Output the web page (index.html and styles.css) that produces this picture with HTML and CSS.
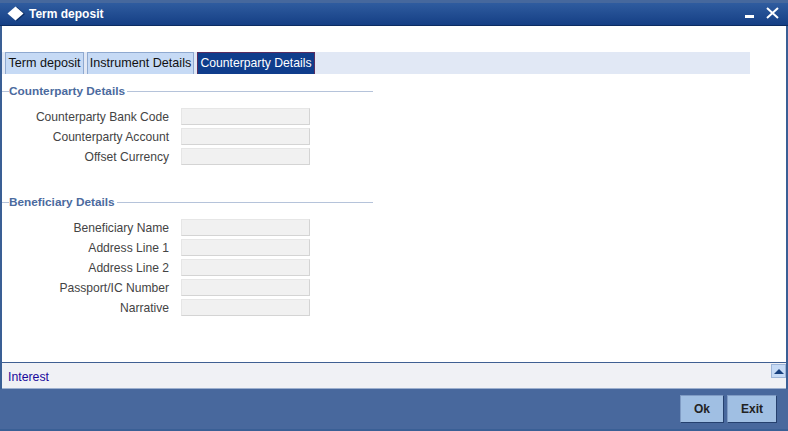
FILE: index.html
```html
<!DOCTYPE html>
<html lang="en">
<head>
    <meta charset="UTF-8">
    <title>Term deposit</title>
    <link rel="stylesheet" href="styles.css">
</head>
<body>

<div class="window">
    <div class="title-bar">
        <svg class="title-icon" width="18" height="16" viewBox="0 0 18 16">
            <path d="M10 1 L18 8 L10 15 L2 8 Z" fill="#0c2c62"/>
            <path d="M8.5 0.5 L16.5 7.5 L8.5 14.5 L0.5 7.5 Z" fill="#fff"/>
        </svg>
        <span class="title-text">Term deposit</span>
        <div class="title-controls">
            <span class="minimize"></span>
            <svg class="close" width="13" height="12" viewBox="0 0 13 12">
                <path d="M1 1 L12 11 M12 1 L1 11" stroke="#fff" stroke-width="2" fill="none"/>
            </svg>
        </div>
    </div>

    <div class="content">
        <div class="tabs">
            <div class="tab tab-term">Term deposit</div>
            <div class="tab tab-instrument">Instrument Details</div>
            <div class="tab tab-active">Counterparty Details</div>
        </div>

        <div class="section section-first">
            <div class="section-title"><span>Counterparty Details</span></div>
            <div class="field"><label>Counterparty Bank Code</label><input type="text" disabled></div>
            <div class="field"><label>Counterparty Account</label><input type="text" disabled></div>
            <div class="field"><label>Offset Currency</label><input type="text" disabled></div>
        </div>

        <div class="section section-second">
            <div class="section-title"><span>Beneficiary Details</span></div>
            <div class="field"><label>Beneficiary Name</label><input type="text" disabled></div>
            <div class="field"><label>Address Line 1</label><input type="text" disabled></div>
            <div class="field"><label>Address Line 2</label><input type="text" disabled></div>
            <div class="field"><label>Passport/IC Number</label><input type="text" disabled></div>
            <div class="field"><label>Narrative</label><input type="text" disabled></div>
        </div>
    </div>

    <div class="sub-bar">
        <a class="sub-link">Interest</a>
        <div class="collapse-btn"><span class="arrow-up"></span></div>
    </div>

    <div class="footer">
        <button class="footer-btn">Ok</button>
        <button class="footer-btn">Exit</button>
    </div>
</div>

</body>
</html>
```

FILE: styles.css
```css
html, body {
    margin: 0;
    padding: 0;
}
body {
    width: 788px;
    height: 431px;
    overflow: hidden;
    font-family: "Liberation Sans", Arial, sans-serif;
    font-size: 12px;
}
.window {
    width: 788px;
    height: 431px;
    box-sizing: border-box;
    display: flex;
    flex-direction: column;
    background: #fff;
    border-left: 2px solid #3a5f95;
    border-right: 2px solid #3a5f95;
}
.title-bar {
    height: 26px;
    margin: 0 -2px;
    box-sizing: border-box;
    display: flex;
    align-items: center;
    padding: 0 9px 1px 7px;
    border-top: 3px solid #46689d;
    border-bottom: 1px solid #0c2c62;
    background: linear-gradient(#2f5c9f, #153f85);
    color: #fff;
}
.title-icon {
    margin-right: 4px;
}
.title-text {
    font-weight: bold;
    font-size: 12px;
}
.title-controls {
    margin-left: auto;
    display: flex;
    align-items: flex-start;
    gap: 12px;
}
.minimize {
    width: 9px;
    height: 3px;
    margin-top: 7px;
    background: #fff;
}
.close {
    margin-top: -1px;
}
.content {
    flex: 1;
    padding-top: 26px;
}
.tabs {
    width: 748px;
    height: 22px;
    display: flex;
    gap: 3px;
    padding-left: 3px;
    box-sizing: border-box;
    background: #e1e8f5;
}
.tab {
    box-sizing: border-box;
    height: 22px;
    padding-top: 3px;
    background: #c6daf5;
    border: 1px solid #8fa9d0;
    border-bottom: none;
    color: #111;
    font-size: 12.6px;
    text-align: center;
    white-space: nowrap;
}
.tab-term {
    width: 79px;
}
.tab-instrument {
    width: 107px;
}
.tab-active {
    width: 118px;
    background: #0f3d8c;
    border-color: #5a2d5e;
    color: #fff;
    font-size: 12.2px;
}
.section-first {
    margin-top: 9px;
}
.section-second {
    margin-top: 28px;
}
.section-title {
    width: 371px;
    height: 16px;
    display: flex;
    align-items: center;
    color: #4b6a9e;
    font-weight: bold;
    font-size: 11.8px;
    margin-bottom: 7px;
}
.section-title::before {
    content: "";
    width: 7px;
    height: 1px;
    background: #b5c3da;
}
.section-title::after {
    content: "";
    flex: 1;
    height: 1px;
    margin-left: 2px;
    background: #b5c3da;
}
.field {
    height: 20px;
    display: flex;
    align-items: center;
}
.field label {
    width: 167px;
    padding-top: 1px;
    text-align: right;
    color: #444;
    font-size: 12.1px;
}
.field input {
    width: 129px;
    height: 17px;
    box-sizing: border-box;
    margin: 0 0 0 12px;
    background: #f1f1f1;
    border: 1px solid #e6e6e6;
    border-right-color: #d4d4d4;
    border-bottom-color: #d4d4d4;
}
.sub-bar {
    height: 27px;
    box-sizing: border-box;
    display: flex;
    align-items: flex-start;
    justify-content: space-between;
    background: #f0f1f5;
    border-top: 1px solid #3f5f92;
    border-bottom: 1px solid #9db0cf;
}
.sub-link {
    color: #1a0a9c;
    font-size: 12.3px;
    padding: 7px 0 0 6px;
}
.collapse-btn {
    width: 15px;
    height: 14px;
    margin-top: 1px;
    box-sizing: border-box;
    display: flex;
    align-items: center;
    justify-content: center;
    background: #c6daf5;
    border: 1px solid #9db5d8;
}
.arrow-up {
    width: 0;
    height: 0;
    border-left: 5px solid transparent;
    border-right: 5px solid transparent;
    border-bottom: 5px solid #17407f;
}
.footer {
    height: 42px;
    margin: 0 -2px;
    box-sizing: border-box;
    display: flex;
    justify-content: flex-end;
    align-items: flex-start;
    gap: 3px;
    padding: 6px 11px 0 0;
    background: #48689d;
    border-bottom: 2px solid #3a5f95;
}
.footer-btn {
    width: 44px;
    height: 28px;
    padding: 0;
    background: #a0bfe3;
    border: 1px solid #7f9bc4;
    border-right-color: #25406e;
    border-bottom-color: #25406e;
    color: #222;
    font-family: "Liberation Sans", Arial, sans-serif;
    font-size: 12px;
    font-weight: bold;
}
.footer-btn + .footer-btn {
    width: 50px;
}
```
